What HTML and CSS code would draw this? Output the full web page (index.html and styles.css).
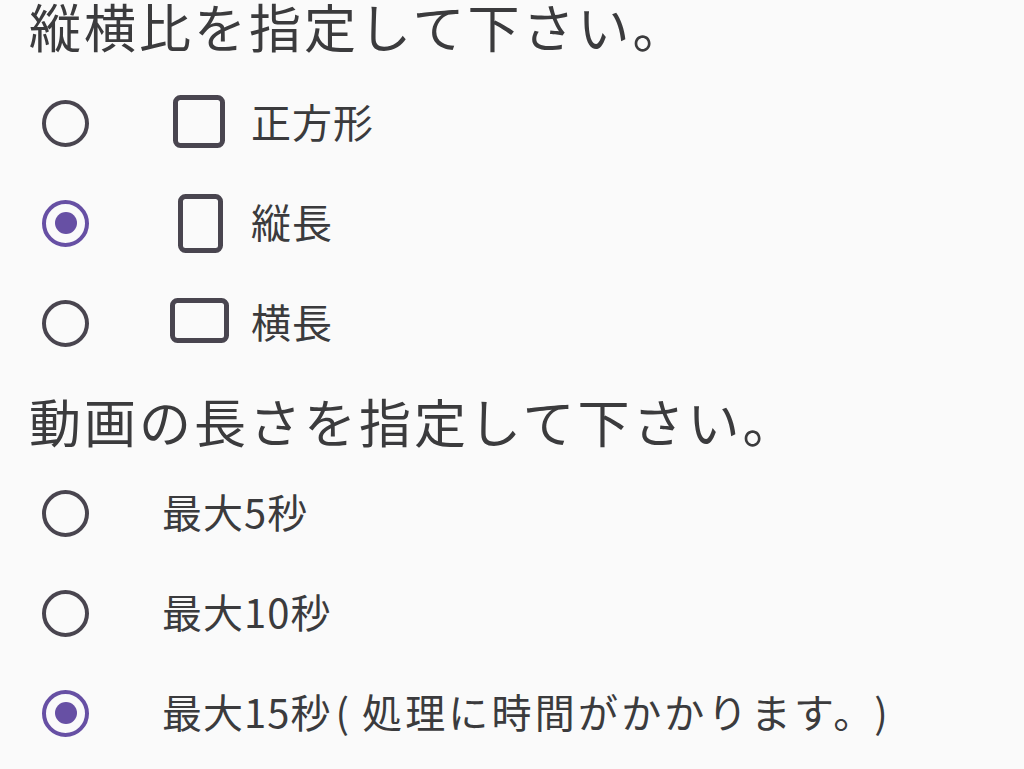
FILE: index.html
```html
<!DOCTYPE html>
<html lang="ja">
<head>
<meta charset="utf-8">
<link rel="stylesheet" href="styles.css">
</head>
<body>
<main class="page">
  <h2 class="heading heading-first">縦横比を指定して下さい。</h2>
  <div class="group group-first">
    <div class="row">
      <span class="radio"></span>
      <span class="shape">
        <svg width="60" height="60" viewBox="0 0 60 60"><rect x="5.5" y="4.5" width="47" height="48" rx="5" fill="none" stroke="#49454f" stroke-width="5"/></svg>
      </span>
      <span class="label">正方形</span>
    </div>
    <div class="row">
      <span class="radio checked"></span>
      <span class="shape">
        <svg width="60" height="60" viewBox="0 0 60 60"><rect x="10.5" y="3.5" width="40" height="54" rx="5" fill="none" stroke="#49454f" stroke-width="5"/></svg>
      </span>
      <span class="label">縦長</span>
    </div>
    <div class="row">
      <span class="radio"></span>
      <span class="shape">
        <svg width="60" height="60" viewBox="0 0 60 60"><rect x="2.5" y="7.5" width="54" height="40" rx="5" fill="none" stroke="#49454f" stroke-width="5"/></svg>
      </span>
      <span class="label">横長</span>
    </div>
  </div>
  <h2 class="heading heading-second">動画の長さを指定して下さい。</h2>
  <div class="group group-second">
    <div class="row row-plain">
      <span class="radio"></span>
      <span class="label">最大5秒</span>
    </div>
    <div class="row row-plain">
      <span class="radio"></span>
      <span class="label">最大10秒</span>
    </div>
    <div class="row row-plain">
      <span class="radio checked"></span>
      <span class="label">最大15秒<span class="paren-open">(</span><span class="wide">処理に時間がかかります。</span><span class="paren-close">)</span></span>
    </div>
  </div>
</main>
</body>
</html>
```

FILE: styles.css
```css
html, body {
  margin: 0;
  padding: 0;
  background: #fafafa;
}

body {
  font-family: "Noto Sans CJK JP", "Noto Sans", sans-serif;
  color: #3b3b3d;
  width: 1024px;
  height: 769px;
  overflow: hidden;
}

.page {
  padding-left: 29px;
}

.heading {
  margin: 0;
  font-size: 52px;
  font-weight: 400;
  line-height: 52px;
  letter-spacing: 3px;
  white-space: nowrap;
}

.heading-second {
  margin-top: 22px;
}

.group {
  display: flex;
  flex-direction: column;
  padding-left: 13px;
}

.group-first {
  margin-top: 21px;
}

.group-second {
  margin-top: 16px;
}

.row {
  display: flex;
  align-items: center;
  height: 100px;
}

.radio {
  position: relative;
  flex: none;
  box-sizing: border-box;
  width: 47px;
  height: 47px;
  border: 4.5px solid #49454f;
  border-radius: 50%;
}

.radio.checked {
  border-color: #6750a4;
}

.radio.checked::after {
  content: "";
  position: absolute;
  left: 50%;
  top: 50%;
  width: 22px;
  height: 22px;
  margin: -11px 0 0 -11px;
  border-radius: 50%;
  background: #6750a4;
}

.shape {
  flex: none;
  display: flex;
  width: 60px;
  height: 60px;
  margin-left: 81px;
}

.label {
  font-size: 40px;
  line-height: 48px;
  padding-bottom: 4px;
  letter-spacing: 1px;
  white-space: nowrap;
  margin-left: 21px;
}

.row-plain .label {
  margin-left: 73px;
}

.paren-open {
  margin-left: 4px;
  margin-right: 12px;
}

.paren-close {
  margin-left: 18px;
}

.wide {
  letter-spacing: 3.2px;
}
```
